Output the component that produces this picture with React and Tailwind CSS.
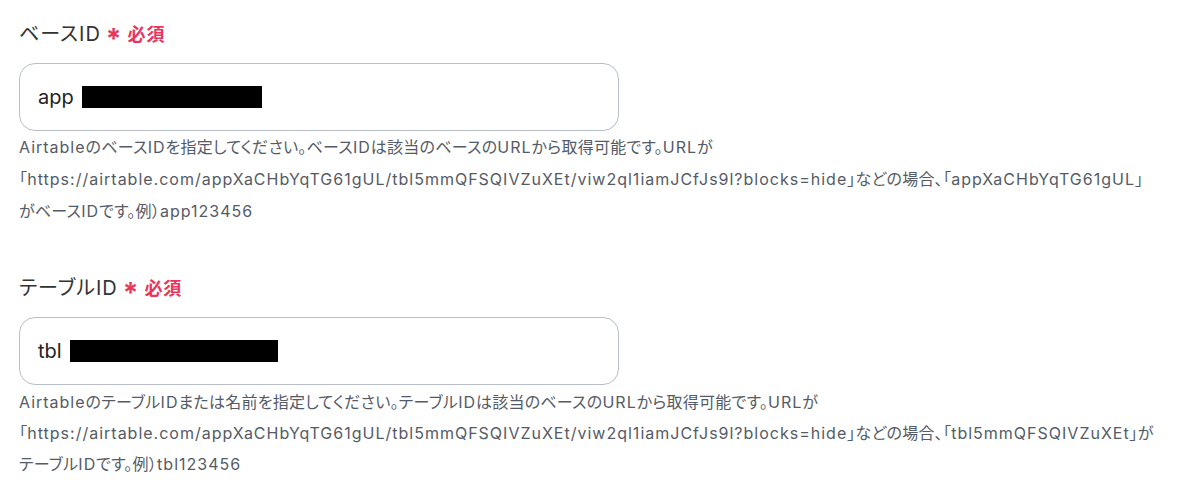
const CJK = /([\u3000-\u30ff\u4e00-\u9fff\uff00-\uffef]+)/;

function Txt({ s }) {
  return s.split(CJK).filter(Boolean).map((part, i) =>
    CJK.test(part) ? (
      <span key={i} className="tracking-[0.25px]">{part}</span>
    ) : (
      <span key={i} className="tracking-[1px]">{part}</span>
    )
  );
}

export default function App() {
  const font = { fontFamily: 'Inter, "Noto Sans CJK JP", sans-serif', fontFeatureSettings: '"palt"' };
  const Field = ({ label, prefix, boxW, boxLeft, lines, lh }) => (
    <div className="flex flex-col">
      <div className="flex items-center h-[30px] tracking-[1px]">
        <span className="text-[20px] text-[#333333]">{label}</span>
        <span className="text-[#e8365d] text-[28px] font-bold leading-none mt-[10px] ml-[5px]">*</span>
        <span className="text-[#e8365d] text-[18px] font-bold ml-[5px]">必須</span>
      </div>
      <div className="mt-[14px] w-[600px] h-[68px] rounded-[16px] border border-[#b8bfca] flex items-center pl-[18px]">
        <span className="text-[20px] text-[#222]">{prefix}</span>
        <span className={`bg-black h-[22px] ${boxLeft} ${boxW}`}></span>
      </div>
      <div className={`text-[16px] text-[#555b66] ${lh}`}>
        {lines.map((l, i) => (
          <div key={i}><Txt s={l} /></div>
        ))}
      </div>
    </div>
  );
  return (
    <div className="w-[1179px] h-[500px] bg-white pl-[19px] pt-[19px]" style={font}>
      <Field
        label="ベースID"
        prefix="app"
        boxLeft="ml-[8px]"
        boxW="w-[180px]"
        lh="leading-[32px]"
        lines={[
          'AirtableのベースIDを指定してください。ベースIDは該当のベースのURLから取得可能です。URLが',
          '「https://airtable.com/appXaCHbYqTG61gUL/tbl5mmQFSQIVZuXEt/viw2ql1iamJCfJs9l?blocks=hide」などの場合、「appXaCHbYqTG61gUL」',
          'がベースIDです。例）app123456',
        ]}
      />
      <div className="h-[46px]"></div>
      <Field
        label="テーブルID"
        prefix="tbl"
        boxLeft="ml-[8px]"
        boxW="w-[208px]"
        lh="leading-[31px] mt-[2px]"
        lines={[
          'AirtableのテーブルIDまたは名前を指定してください。テーブルIDは該当のベースのURLから取得可能です。URLが',
          '「https://airtable.com/appXaCHbYqTG61gUL/tbl5mmQFSQIVZuXEt/viw2ql1iamJCfJs9l?blocks=hide」などの場合、「tbl5mmQFSQIVZuXEt」が',
          'テーブルIDです。例）tbl123456',
        ]}
      />
    </div>
  );
}
